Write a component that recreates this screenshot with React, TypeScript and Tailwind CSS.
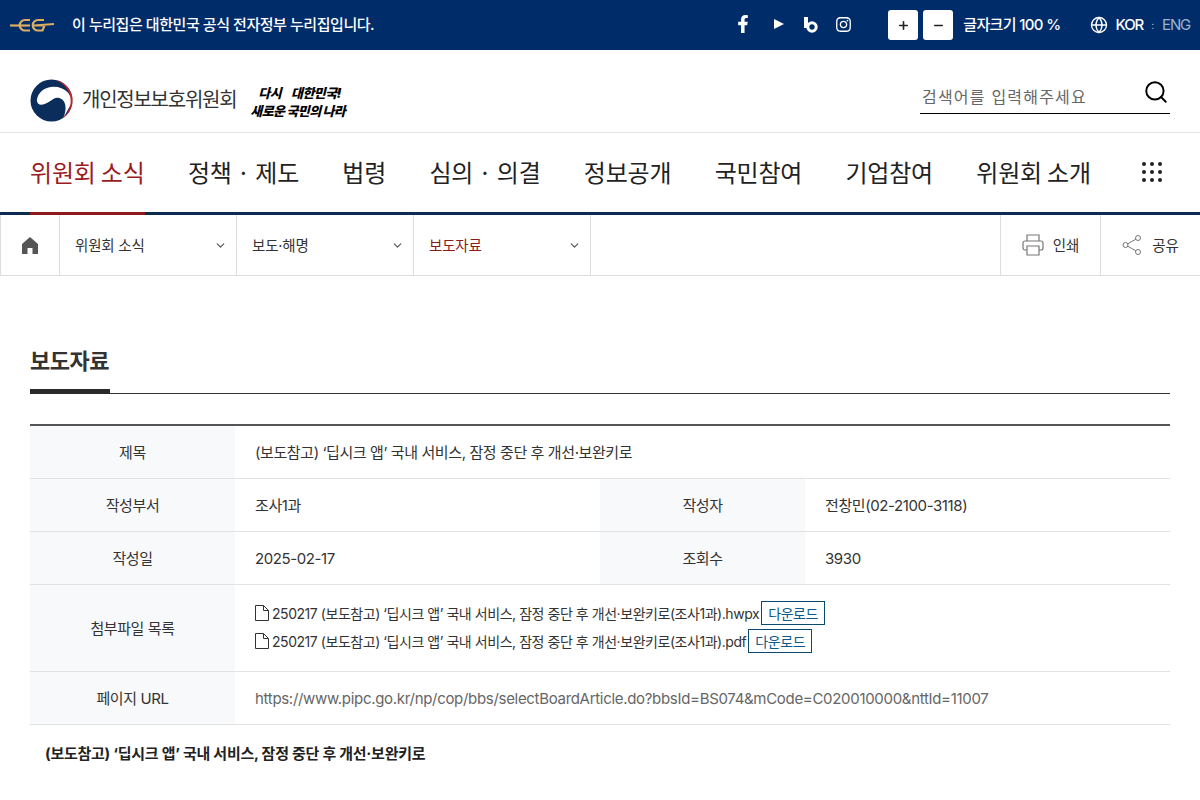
import React from 'react';
import { Plus, Minus, Globe, ChevronDown, Search } from 'lucide-react';
import { FaFacebookF, FaInstagram } from 'react-icons/fa';

const font = { fontFamily: 'Inter, "Noto Sans CJK KR", sans-serif' };

const menus = ['위원회 소식', '정책 · 제도', '법령', '심의 · 의결', '정보공개', '국민참여', '기업참여', '위원회 소개'];

const Emblem = () => (
  <svg viewBox="0 0 44 44" className="w-[43px] h-[43px] shrink-0">
    <circle cx="22" cy="22" r="21.5" fill="#0b2d5b" />
    <path d="M7 22C8 13 16 8 24 8c6 0 11 2 15 6l5 8-11 20c4-7 5-17 0-21-5-4-9-1-13 2-5 3-12 6-13-1Z" fill="#fff" />
    <path d="M25 .7A21.5 21.5 0 0 1 33 40.5 A22.8 22.8 0 0 0 25 .7Z" fill="#c4232b" />
  </svg>
);

const Eg = () => (
  <svg viewBox="0 0 44 16" className="w-[44px] h-[16px]" fill="none" stroke="#dcae62" strokeWidth="2.2">
    <path d="M0 8.5h20" />
    <path d="M20 3h-5a5.2 5.2 0 0 0 0 10.5h5" />
    <path d="M34 3h-6a5.2 5.2 0 0 0 0 10.5h4.500l2-5H24l20-1.500" />
  </svg>
);

const App: React.FC = () => {
  return (
    <div className="w-[1200px] h-[800px] overflow-hidden bg-white text-[#222]" style={font}>
      {/* 누리집 안내 */}
      <div className="h-[50px] bg-[#002d69] flex items-center pl-[10px] pr-[10px] text-white">
        <Eg />
        <span className="ml-[18px] text-[15px] font-medium tracking-[-0.45px]">이 누리집은 대한민국 공식 전자정부 누리집입니다.</span>
        <div className="ml-auto flex items-center">
          <FaFacebookF className="w-[18px] h-[18px] -mt-[2px]" />
          <svg viewBox="0 0 10 10" className="w-[10px] h-[10px] ml-[22px] -mt-[2px]" fill="#fff"><path d="M0 0l10 5-10 5z" /></svg>
          <svg viewBox="0 0 14 16" className="w-[14px] h-[16px] ml-[20px] -mt-[1px]" fill="none" stroke="#fff">
            <path d="M2 0v11" strokeWidth="4" />
            <circle cx="8" cy="10" r="4.200" strokeWidth="3" />
          </svg>
          <FaInstagram className="w-[17px] h-[17px] ml-[17px] -mt-[2px]" />
          <button className="ml-[36px] w-[30px] h-[30px] bg-white rounded-[3px] flex items-center justify-center text-[#222]"><Plus className="w-[13px] h-[13px]" strokeWidth={3} /></button>
          <button className="ml-[5px] w-[30px] h-[30px] bg-white rounded-[3px] flex items-center justify-center text-[#222]"><Minus className="w-[13px] h-[13px]" strokeWidth={3} /></button>
          <span className="ml-[10px] text-[15px] font-medium tracking-[-0.65px]">글자크기 100 %</span>
          <Globe className="w-[18px] h-[18px] ml-[30px]" strokeWidth={1.8} />
          <span className="ml-[7px] text-[15px] font-medium tracking-[-1.1px]">KOR</span>
          <span className="ml-[8px] text-[10px] text-white/70">:</span>
          <span className="ml-[8px] text-[15px] tracking-[-1.2px] text-[#9fb2cf]">ENG</span>
        </div>
      </div>

      {/* 로고, 검색 */}
      <div className="h-[83px] pt-[18px] border-b border-[#e5e5e5] flex items-center px-[30px]">
        <Emblem />
        <span className="ml-[9px] text-[20px] text-[#333] tracking-[-1.25px]">개인정보보호위원회</span>
        <div className="ml-[14px] mt-[3px] text-black font-black italic text-[13px] leading-[18px] tracking-[-0.6px]">
          <div className="pl-[8px] [word-spacing:8px]">다시 대한민국!</div>
          <div>새로운 국민의 나라</div>
        </div>
        <div className="ml-auto w-[250px] h-[34px] mb-[6px] border-b border-black flex items-center justify-between pr-[1px]">
          <span className="pl-[2px] text-[16px] text-[#666] tracking-[1.2px]">검색어를 입력해주세요</span>
          <Search className="w-[26px] h-[26px] -mt-[10px] text-black" strokeWidth={1.8} />
        </div>
      </div>

      {/* 메인 메뉴 */}
      <div className="h-[82px] border-b-[3px] border-[#0b2b52] flex items-stretch pl-[30px] pr-[38px] justify-between font-['Noto_Sans_CJK_KR']">
        <div className="flex gap-[43.3px]">
          {menus.map((m, i) => (
            <div key={m} className={`h-[82px] pb-[2px] flex items-center text-[24px] tracking-[-0.2px] ${i === 0 ? 'text-[#9b1c1f] border-b-[3px] border-[#8e1a1c]' : 'text-[#222] border-b-[3px] border-transparent'}`}>{m}</div>
          ))}
        </div>
        <div className="grid grid-cols-3 gap-[4px] self-center w-[20px] -mt-[1px]">
          {Array.from({ length: 9 }).map((_, i) => <span key={i} className="w-[4px] h-[4px] rounded-full bg-[#222]" />)}
        </div>
      </div>

      {/* 경로 */}
      <div className="h-[61px] border-b border-[#ddd] flex text-[14.5px] tracking-[-0.2px] text-[#333]">
        <div className="w-[60px] border-l border-r border-[#ddd] flex items-center justify-center">
          <svg viewBox="0 0 16 17" className="w-[16px] h-[17px]" fill="#555"><path fillRule="evenodd" d="M8 0l8 7v10h-5.500v-6h-5v6H0V7z" /></svg>
        </div>
        {['위원회 소식', '보도·해명', '보도자료'].map((c, i) => (
          <div key={c} className="w-[177px] border-r border-[#ddd] flex items-center justify-between pl-[15px] pr-[9px]">
            <span className={`pt-[2px] ${i === 2 ? 'text-[#8b1a1a]' : ''}`}>{c}</span>
            <ChevronDown className="w-[13px] h-[13px] text-[#555]" strokeWidth={2.2} />
          </div>
        ))}
        <div className="ml-auto w-[100px] border-l border-[#ddd] flex items-center justify-center gap-[9px]">
          <svg viewBox="0 0 22 22" className="w-[22px] h-[22px]" fill="none" stroke="#777" strokeWidth="1.2">
            <path d="M5 7V1h12v6M5 16H3a2 2 0 0 1-2-2V9a2 2 0 0 1 2-2h16a2 2 0 0 1 2 2v5a2 2 0 0 1-2 2h-2" />
            <path d="M5 12h12v9H5z" />
          </svg>
          <span className="pt-[2px]">인쇄</span>
        </div>
        <div className="w-[100px] border-l border-[#ddd] flex items-center justify-center gap-[10px]">
          <svg viewBox="0 0 20 20" className="w-[20px] h-[20px]" fill="none" stroke="#777" strokeWidth="1">
            <circle cx="3.500" cy="10" r="2.500" /><circle cx="16" cy="3" r="2.500" /><circle cx="16" cy="17" r="2.500" />
            <path d="M5.800 8.800l8-4.600M5.800 11.200l8 4.600" />
          </svg>
          <span className="pt-[2px]">공유</span>
        </div>
      </div>

      {/* 본문 */}
      <div className="px-[30px] pt-[69px]">
        <div className="border-b border-[#333] flex h-[49px]">
          <h2 className="w-[80px] h-[49px] border-b-[5px] border-[#2a2a2a] text-[22px] font-bold tracking-[-0.5px] text-[#333] leading-[32px] whitespace-nowrap">보도자료</h2>
        </div>
        <div className="mt-[30px] border-t-2 border-[#555] text-[15px] tracking-[-0.4px] text-[#333]">
          <div className="flex h-[53px] border-b border-[#e2e2e2] [&>div]:pt-[2px]">
            <div className="w-[205px] bg-[#f8f9fb] flex items-center justify-center">제목</div>
            <div className="flex-1 px-[20px] flex items-center">(보도참고) ‘딥시크 앱’ 국내 서비스, 잠정 중단 후 개선·보완키로</div>
          </div>
          <div className="flex h-[53px] border-b border-[#e2e2e2] [&>div]:pt-[2px]">
            <div className="w-[205px] bg-[#f8f9fb] flex items-center justify-center">작성부서</div>
            <div className="w-[365px] px-[20px] flex items-center">조사1과</div>
            <div className="w-[205px] bg-[#f8f9fb] flex items-center justify-center">작성자</div>
            <div className="flex-1 px-[20px] flex items-center">전창민(02-2100-3118)</div>
          </div>
          <div className="flex h-[53px] border-b border-[#e2e2e2] [&>div]:pt-[2px]">
            <div className="w-[205px] bg-[#f8f9fb] flex items-center justify-center">작성일</div>
            <div className="w-[365px] px-[20px] flex items-center">2025-02-17</div>
            <div className="w-[205px] bg-[#f8f9fb] flex items-center justify-center">조회수</div>
            <div className="flex-1 px-[20px] flex items-center">3930</div>
          </div>
          <div className="flex h-[87px] border-b border-[#e2e2e2]">
            <div className="w-[205px] pt-[2px] bg-[#f8f9fb] flex items-center justify-center">첨부파일 목록</div>
            <div className="flex-1 px-[20px] pb-[2px] flex flex-col justify-center gap-[4px] text-[14px] tracking-[-0.45px]">
              {['hwpx', 'pdf'].map((ext) => (
                <div key={ext} className="flex items-center h-[24px]">
                  <svg viewBox="0 0 14 16" className="w-[14px] h-[16px] mr-[3px]" fill="none" stroke="#333" strokeWidth="1">
                    <path d="M.5.5h8l5 5v10H.5zM8.500.5v5h5" />
                  </svg>
                  <span>250217 (보도참고) ‘딥시크 앱’ 국내 서비스, 잠정 중단 후 개선·보완키로(조사1과).{ext}</span>
                  <span className="ml-[2px] h-[24px] px-[6px] border border-[#0b4a6f] text-[#0b5a8a] flex items-center">다운로드</span>
                </div>
              ))}
            </div>
          </div>
          <div className="flex h-[53px] border-b border-[#e2e2e2] [&>div]:pt-[2px]">
            <div className="w-[205px] bg-[#f8f9fb] flex items-center justify-center">페이지 URL</div>
            <div className="flex-1 px-[20px] flex items-center text-[#666] tracking-[-0.31px]">https://www.pipc.go.kr/np/cop/bbs/selectBoardArticle.do?bbsId=BS074&amp;mCode=C020010000&amp;nttId=11007</div>
          </div>
          <div className="pl-[15px] pt-[18px] font-bold text-[#222] tracking-[-0.25px]">(보도참고) ‘딥시크 앱’ 국내 서비스, 잠정 중단 후 개선·보완키로</div>
        </div>
      </div>
    </div>
  );
};

export default App;
